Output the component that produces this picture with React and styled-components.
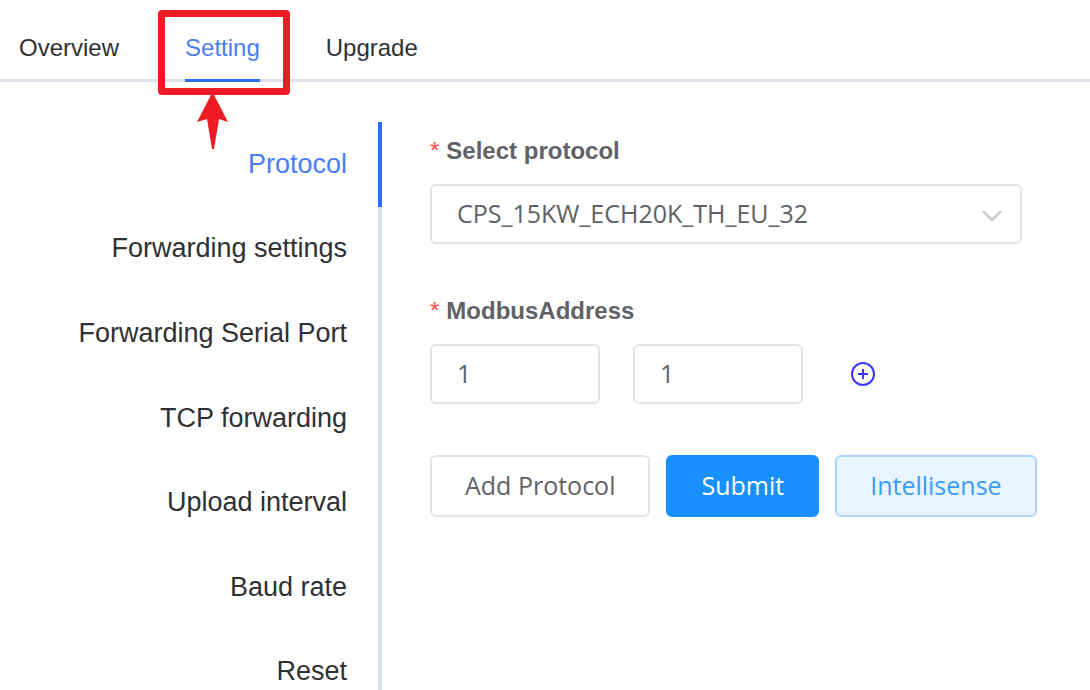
import React, { useState } from "react";
import styled, { createGlobalStyle, css } from "styled-components";

const tabs = ["Overview", "Setting", "Upgrade"];

const menu = [
  "Protocol",
  "Forwarding settings",
  "Forwarding Serial Port",
  "TCP forwarding",
  "Upload interval",
  "Baud rate",
  "Reset",
];

const App = () => {
  const [tab, setTab] = useState("Setting");
  const [section, setSection] = useState("Protocol");

  return (
    <Page>
      <GlobalStyle />
      <TabBar>
        {tabs.map((name) => (
          <TabItem key={name}>
            <Tab $active={name === tab} onClick={() => setTab(name)}>
              {name}
            </Tab>
            {name === "Setting" && (
              <>
                <Highlight />
                <Arrow viewBox="0 0 32 58" aria-hidden="true">
                  <path d="M15.500 0L31 30L22 27L17 57H15L10 27L0 30Z" fill="#ed1c24" />
                </Arrow>
              </>
            )}
          </TabItem>
        ))}
      </TabBar>
      <Content>
        <SideMenu>
          {menu.map((name) => (
            <MenuItem
              key={name}
              $active={name === section}
              onClick={() => setSection(name)}
            >
              {name}
            </MenuItem>
          ))}
        </SideMenu>
        <Form onSubmit={(e) => e.preventDefault()}>
          <Field>
            <Label htmlFor="protocol">Select protocol</Label>
            <SelectWrapper>
              <Select id="protocol" defaultValue="CPS_15KW_ECH20K_TH_EU_32">
                <option>CPS_15KW_ECH20K_TH_EU_32</option>
              </Select>
              <Chevron viewBox="0 0 20 12" aria-hidden="true">
                <path d="M1 1L10 10L19 1" fill="none" stroke="#c0c4cc" strokeWidth="2" />
              </Chevron>
            </SelectWrapper>
          </Field>
          <Field>
            <Label htmlFor="address-from">ModbusAddress</Label>
            <AddressRow>
              <Input id="address-from" defaultValue="1" />
              <Input aria-label="ModbusAddress end" defaultValue="1" />
              <AddButton type="button" aria-label="Add address">
                <svg width="26" height="26" viewBox="0 0 26 26" fill="none" stroke="#3a35ff">
                  <circle cx="13" cy="13" r="11" strokeWidth="2" />
                  <path d="M13 8V18M8 13H18" strokeWidth="2" />
                </svg>
              </AddButton>
            </AddressRow>
          </Field>
          <Actions>
            <Button type="button">Add Protocol</Button>
            <PrimaryButton type="submit">Submit</PrimaryButton>
            <PlainButton type="button">Intellisense</PlainButton>
          </Actions>
        </Form>
      </Content>
    </Page>
  );
};

const GlobalStyle = createGlobalStyle`
  * {
    box-sizing: border-box;
  }
  body {
    margin: 0;
    background: #fff;
    font-family: "Liberation Sans", Arial, sans-serif;
  }
`;

const controlFont = css`
  font-family: "Open Sans", "Noto Sans", sans-serif;
  font-size: 25px;
  color: #606266;
`;

const Page = styled.div`
  display: flex;
  flex-direction: column;
  height: 100vh;
  overflow: hidden;
`;

const TabBar = styled.nav`
  display: flex;
  gap: 66px;
  padding: 16px 19px 0;
  border-bottom: 3px solid #dce1ea;
`;

const TabItem = styled.div`
  position: relative;
`;

const Tab = styled.button`
  display: block;
  height: 66px;
  margin-bottom: -3px;
  padding: 0;
  border: 0;
  border-bottom: 3px solid ${({ $active }) => ($active ? "#2f6bee" : "transparent")};
  background: none;
  font-family: inherit;
  font-size: 24px;
  color: ${({ $active }) => ($active ? "#4a7df5" : "#303133")};
  cursor: pointer;
`;

const Highlight = styled.span`
  position: absolute;
  top: -6px;
  right: -30px;
  bottom: -16px;
  left: -27px;
  border: 7px solid #ed1c24;
  border-radius: 4px;
  pointer-events: none;
`;

const Arrow = styled.svg`
  position: absolute;
  top: 76px;
  left: 12px;
  width: 32px;
  height: 58px;
`;

const Content = styled.div`
  display: flex;
  margin-top: 40px;
`;

const SideMenu = styled.nav`
  display: flex;
  flex-direction: column;
  flex: 0 0 382px;
  height: 592px;
`;

const MenuItem = styled.button`
  flex: 1;
  padding: 0 31px 0 0;
  border: 0;
  border-right: 4px solid ${({ $active }) => ($active ? "#2f6bee" : "#dce1ea")};
  background: none;
  font-family: inherit;
  font-size: 27px;
  text-align: right;
  color: ${({ $active }) => ($active ? "#4a7df5" : "#303133")};
  cursor: pointer;
`;

const Form = styled.form`
  flex: 1;
  padding: 13px 52px 0 48px;
`;

const Field = styled.div`
  margin-bottom: 51px;
  padding-right: 16px;
`;

const Label = styled.label`
  display: block;
  margin-bottom: 17px;
  font-size: 24px;
  font-weight: bold;
  line-height: 32px;
  color: #606266;

  &::before {
    content: "*";
    margin-right: 7px;
    font-weight: normal;
    color: #ff4d4f;
  }
`;

const box = css`
  ${controlFont}
  height: 60px;
  padding: 0 25px 2px;
  border: 2px solid #e1e4ea;
  border-radius: 6px;
  background: #fff;
`;

const SelectWrapper = styled.div`
  position: relative;
`;

const Select = styled.select`
  ${box}
  display: block;
  width: 100%;
  appearance: none;
`;

const Chevron = styled.svg`
  position: absolute;
  top: 26px;
  right: 20px;
  width: 20px;
  height: 12px;
  pointer-events: none;
`;

const AddressRow = styled.div`
  display: flex;
  align-items: center;
  gap: 33px;
`;

const Input = styled.input`
  ${box}
  width: 170px;
`;

const AddButton = styled.button`
  display: flex;
  margin-left: 14px;
  padding: 0;
  border: 0;
  background: none;
  cursor: pointer;
`;

const Actions = styled.div`
  display: flex;
  gap: 16px;
`;

const Button = styled.button`
  ${controlFont}
  height: 62px;
  padding: 0 33px 3px;
  border: 2px solid #e1e4ea;
  border-radius: 6px;
  background: #fff;
  white-space: nowrap;
  cursor: pointer;
`;

const PrimaryButton = styled(Button)`
  border-color: #1890ff;
  background: #1890ff;
  color: #fff;
`;

const PlainButton = styled(Button)`
  border-color: #a9d5ff;
  background: #e8f4ff;
  color: #3b9bff;
`;

export default App;
